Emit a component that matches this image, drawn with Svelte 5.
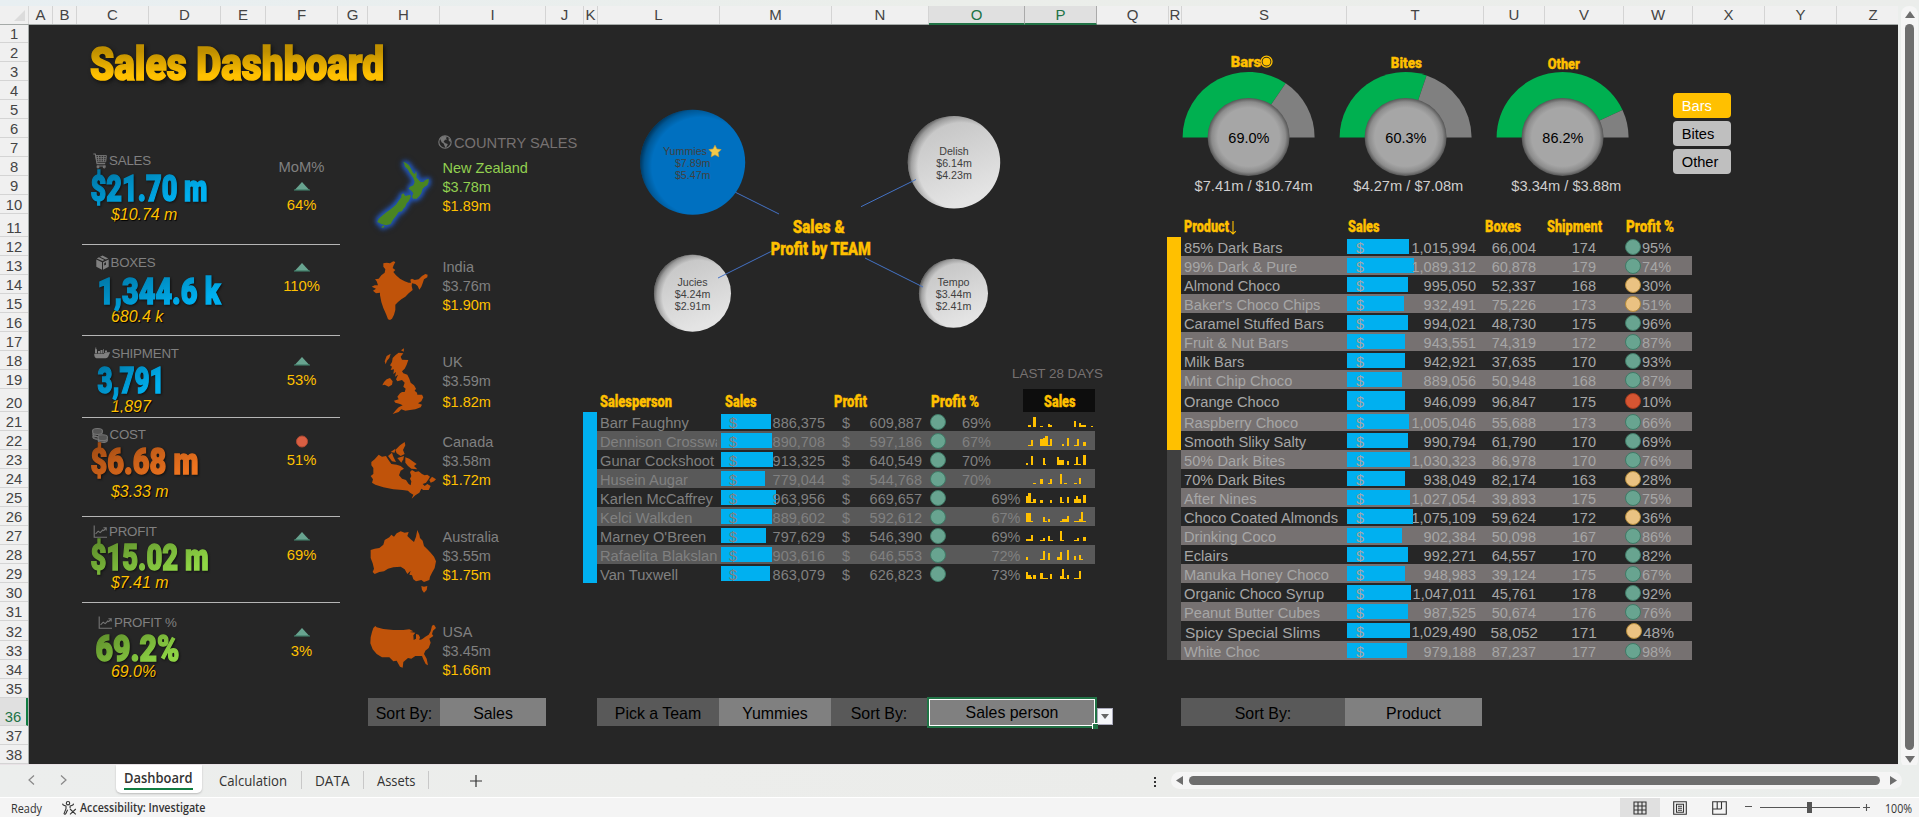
<script>
  const columns = [
    ['A', 24], ['B', 24], ['C', 72], ['D', 72], ['E', 45], ['F', 72], ['G', 30], ['H', 72], ['I', 106], ['J', 38],
    ['K', 14], ['L', 122], ['M', 112], ['N', 97], ['O', 96], ['P', 72], ['Q', 72], ['R', 13], ['S', 165], ['T', 137],
    ['U', 61], ['V', 79], ['W', 69], ['X', 72], ['Y', 72], ['Z', 62]
  ];
  const tall = { 1: 18, 11: 23, 20: 23, 32: 20, 36: 28 };
  const sheetRows = Array.from({ length: 38 }, (_, i) => ({ n: i + 1, h: tall[i + 1] ?? 19 }));

  const kpis = [
    { icon: 'cart', label: 'SALES', x: 63.5, gap: 2.5, value: '$21.70 m', vx: 61.5, vw: 117, sub: '$10.74 m', tone: 'blue', mom: '64%', h: 105, pad: 13.4, row: 36.4, base: 31.9, mp: 18.4, up: true },
    { icon: 'box', label: 'BOXES', x: 66.5, gap: 2, value: '1,344.6 k', vx: 68.5, vw: 123, sub: '680.4 k', tone: 'blue', mom: '110%', h: 91, pad: 10.4, row: 37.1, base: 33.6, mp: 16.7, up: true },
    { icon: 'ship', label: 'SHIPMENT', x: 64.5, gap: 1.5, value: '3,791', vx: 68.5, vw: 67, sub: '1,897', tone: 'blue', mom: '53%', h: 82, pad: 9.7, row: 36.5, base: 31, mp: 20.3, up: true, clip: true },
    { icon: 'coins', label: 'COST', x: 63, gap: 1.5, value: '$6.68 m', vx: 61.5, vw: 108, sub: '$3.33 m', tone: 'orange', mom: '51%', h: 99, pad: 9.4, row: 40.1, base: 31.6, mp: 18.4, up: false },
    { icon: 'chart', label: 'PROFIT', x: 63.5, gap: 2.5, value: '$15.02 m', vx: 61.5, vw: 118, sub: '$7.41 m', tone: 'green', mom: '69%', h: 86, pad: 7.4, row: 34.1, base: 30.3, mp: 14.3, up: true },
    { icon: 'chart', label: 'PROFIT %', x: 68.5, gap: 2.5, value: '69.2%', vx: 66.5, vw: 84, sub: '69.0%', tone: 'green', mom: '3%', h: 88, pad: 11.7, row: 32.8, base: 30.3, mp: 23.8, up: true }
  ];

  const countries = [
    { name: 'New Zealand', a: '$3.78m', b: '$1.89m', h: 99, y: 471, hot: true, shapes: [
      '190,485 198,489 207,496 214,508 219,518 225,522 228,513 230,522 229,532 236,540 242,546 250,546 256,540 266,536 266,546 262,556 254,560 248,566 244,580 238,588 230,596 220,596 216,590 220,580 214,572 206,566 210,560 220,556 224,546 220,534 210,520 203,508 195,500 192,490',
      '190,580 196,588 204,586 212,584 212,592 206,604 200,610 196,620 190,626 186,634 176,636 168,648 160,658 152,672 138,676 124,672 112,666 116,656 128,646 140,636 154,626 168,614 176,602 184,592 184,584',
      '124,682 130,676 134,680 128,684'] },
    { name: 'India', a: '$3.76m', b: '$1.90m', h: 95, y: 768, shapes: [
      '130,790 140,788 150,790 160,784 166,786 161,796 158,804 166,810 160,816 168,826 180,836 194,844 206,848 213,848 211,839 216,836 224,840 236,838 246,828 256,822 263,824 262,832 252,838 248,850 244,860 238,869 233,858 226,852 216,850 215,858 218,870 206,880 196,890 184,898 174,906 166,914 166,930 162,944 156,956 150,960 144,958 138,942 130,924 124,906 120,886 120,878 108,880 99,872 108,866 95,860 104,856 114,856 110,844 105,838 116,836 124,826 134,818 136,808 130,800'] },
    { name: 'UK', a: '$3.59m', b: '$1.82m', h: 80, y: 1053, uk: true, shapes: [
      '166,1066 176,1058 190,1060 182,1070 186,1079 205,1080 200,1094 194,1106 186,1114 190,1120 202,1124 208,1136 212,1148 222,1156 228,1166 224,1172 231,1178 232,1184 246,1184 250,1192 244,1204 234,1210 246,1214 242,1222 226,1228 210,1230 196,1232 184,1228 176,1236 158,1242 168,1230 176,1222 188,1216 180,1212 166,1208 162,1202 176,1198 172,1190 180,1180 186,1176 194,1176 197,1166 190,1160 194,1148 186,1140 172,1144 168,1138 174,1124 165,1130 168,1116 160,1122 162,1108 152,1110 156,1100 150,1096 156,1086 158,1074',
      '140,1138 150,1134 158,1144 156,1154 146,1160 134,1154 127,1156 132,1146',
      '140,1068 152,1061 148,1074 141,1082 137,1093 134,1084', '183,1051 192,1045 191,1055'] },
    { name: 'Canada', a: '$3.58m', b: '$1.72m', h: 95, y: 93, shapes: [
      '94,186 104,178 116,164 126,170 138,168 144,178 154,192 170,194 182,198 192,206 182,212 177,226 186,236 198,240 206,252 212,256 214,244 210,236 214,228 210,216 216,210 226,216 236,214 246,222 254,226 262,224 270,230 264,240 258,248 248,252 254,258 262,252 272,258 266,270 250,270 244,266 238,278 226,286 215,296 220,284 210,278 204,272 188,270 160,268 130,262 106,254 96,248 99,238 92,228 100,222 100,204 94,196',
      '144,168 156,158 160,170 168,186 156,184', '152,156 166,146 164,158', '166,150 180,136 194,126 196,136 189,150 194,162 182,168 170,160',
      '172,174 192,168 190,178 184,188', '196,172 208,176 218,184 230,192 222,198 232,208 214,206 204,198 196,188', '268,240 276,230 288,238 282,244 272,248'] },
    { name: 'Australia', a: '$3.55m', b: '$1.75m', h: 95, y: 378, shapes: [
      '92,450 104,446 118,444 130,434 134,420 148,412 154,404 162,410 170,400 182,394 194,398 206,396 202,408 212,418 222,426 228,410 232,390 238,404 240,414 248,422 252,438 262,448 272,458 282,470 288,484 284,504 276,518 270,530 268,540 252,546 244,540 228,544 220,538 216,526 208,524 212,512 202,522 194,508 182,500 160,502 144,506 132,514 118,516 104,522 98,516 102,506 98,490 92,474',
      '244,558 252,560 262,558 260,570 252,578 246,570'] },
    { name: 'USA', a: '$3.45m', b: '$1.66m', h: 77, y: 663, shapes: [
      '100,684 106,678 110,682 130,687 160,690 190,690 208,688 220,694 209,696 226,698 220,706 221,720 228,716 228,702 236,704 240,712 238,720 246,718 256,710 266,704 272,694 276,677 282,674 288,684 279,692 276,702 280,708 268,716 272,728 266,744 256,752 252,762 260,776 264,796 257,792 250,778 246,768 226,768 214,776 204,774 190,786 188,803 180,800 170,782 160,784 148,772 126,772 110,762 98,748 91,730 92,712 96,696'] }
  ];

  const bubbles = [
    { name: 'Yummies', a: '$7.89m', b: '$5.47m', x: 692.7, y: 162.3, r: 52.5, hot: true },
    { name: 'Delish', a: '$6.14m', b: '$4.23m', x: 954, y: 162.3, r: 46.2 },
    { name: 'Jucies', a: '$4.24m', b: '$2.91m', x: 692.5, y: 293.3, r: 38.5 },
    { name: 'Tempo', a: '$3.44m', b: '$2.41m', x: 953.5, y: 293.3, r: 34.5 }
  ];

  const people = [
    { n: 'Barr Faughny', s: '886,375', p: '609,887', q: '69%', w: 50, k: [[1282,9,6],[1296,9,30],[1316,8,3],[1338,6,9],[1343,7,5],[1411,6,18],[1425,6,12],[1431,14,6],[1458,6,3]] },
    { n: 'Dennison Crosswaite', s: '890,708', p: '597,186', q: '67%', w: 51, k: [[1282,9,3],[1291,5,18],[1316,9,21],[1325,5,24],[1330,8,30],[1338,5,4],[1344,6,21],[1378,5,6],[1391,6,24],[1411,9,3],[1418,7,21],[1436,9,12]] },
    { n: 'Gunar Cockshoot', s: '913,325', p: '640,549', q: '70%', w: 52, k: [[1277,5,6],[1291,5,27],[1324,5,21],[1329,4,3],[1364,5,24],[1369,14,15],[1391,6,12],[1411,6,4],[1417,6,24],[1423,8,3],[1436,9,30]] },
    { n: 'Husein Augar', s: '779,044', p: '544,768', q: '70%', w: 44, k: [[1296,9,3],[1316,8,15],[1338,5,3],[1344,5,15],[1371,7,30],[1383,9,3],[1411,9,4],[1425,6,18]] },
    { n: 'Karlen McCaffrey', s: '963,956', p: '669,657', q: '69%', w: 55, far: true, k: [[1277,6,21],[1282,9,30],[1291,7,4],[1296,9,12],[1316,8,9],[1344,6,9],[1371,7,18],[1378,5,4],[1391,6,18],[1411,6,12],[1417,6,21],[1423,8,12],[1436,9,24]] },
    { n: 'Kelci Walkden', s: '889,602', p: '592,612', q: '67%', w: 51, far: true, k: [[1277,14,27],[1291,5,3],[1324,6,15],[1330,6,3],[1338,6,9],[1371,8,3],[1378,12,9],[1391,6,18],[1411,14,3],[1425,6,9],[1431,5,30],[1436,9,3]] },
    { n: "Marney O'Breen", s: '797,629', p: '546,390', q: '69%', w: 45, far: true, k: [[1277,13,5],[1291,6,18],[1316,8,4],[1324,6,9],[1338,5,15],[1343,8,3],[1371,7,30],[1377,6,3],[1411,9,3],[1418,7,8],[1436,9,12]] },
    { n: 'Rafaelita Blaksland', s: '903,616', p: '646,553', q: '72%', w: 51, far: true, k: [[1277,5,9],[1316,8,3],[1324,6,27],[1338,6,21],[1364,7,9],[1371,7,24],[1391,6,30],[1411,6,12],[1425,6,15],[1431,6,3]] },
    { n: 'Van Tuxwell', s: '863,079', p: '626,823', q: '73%', w: 49, far: true, k: [[1277,6,20],[1283,7,12],[1289,4,6],[1296,9,12],[1316,8,18],[1324,13,3],[1344,6,15],[1371,6,9],[1377,6,30],[1383,4,3],[1391,6,12],[1411,13,3],[1425,6,24]] }
  ];

  const products = [
    ['85% Dark Bars', '1,015,994', '66,004', '174', '95%', 62, 'g'],
    ['99% Dark & Pure', '1,089,312', '60,878', '179', '74%', 67, 'g'],
    ['Almond Choco', '995,050', '52,337', '168', '30%', 61, 'y'],
    ["Baker's Choco Chips", '932,491', '75,226', '173', '51%', 57, 'y'],
    ['Caramel Stuffed Bars', '994,021', '48,730', '175', '96%', 61, 'g'],
    ['Fruit & Nut Bars', '943,551', '74,319', '172', '87%', 58, 'g'],
    ['Milk Bars', '942,921', '37,635', '170', '93%', 58, 'g'],
    ['Mint Chip Choco', '889,056', '50,948', '168', '87%', 55, 'g'],
    ['Orange Choco', '946,099', '96,847', '175', '10%', 58, 'r'],
    ['Raspberry Choco', '1,005,046', '55,688', '173', '66%', 62, 'g'],
    ['Smooth Sliky Salty', '990,794', '61,790', '170', '69%', 61, 'g'],
    ['50% Dark Bites', '1,030,323', '86,978', '170', '76%', 63, 'g'],
    ['70% Dark Bites', '938,049', '82,174', '163', '28%', 58, 'y'],
    ['After Nines', '1,027,054', '39,893', '175', '75%', 63, 'g'],
    ['Choco Coated Almonds', '1,075,109', '59,624', '172', '36%', 66, 'y'],
    ['Drinking Coco', '902,384', '50,098', '167', '86%', 55, 'g'],
    ['Eclairs', '992,271', '64,557', '170', '82%', 61, 'g'],
    ['Manuka Honey Choco', '948,983', '39,124', '175', '67%', 58, 'g'],
    ['Organic Choco Syrup', '1,047,011', '45,761', '178', '92%', 64, 'g'],
    ['Peanut Butter Cubes', '987,525', '50,674', '176', '76%', 61, 'g'],
    ['Spicy Special Slims', '1,029,490', '58,052', '171', '48%', 63, 'y'],
    ['White Choc', '979,188', '87,237', '177', '98%', 60, 'g']
  ];

  const gauges = [
    { name: 'Bars', w: 30.5, x: 60.7, y: 42.3, v: 0.69, label: '69.0%', foot: '$7.41m / $10.74m', fx: 83.6, radio: true },
    { name: 'Bites', w: 31, x: 63.8, y: 43, v: 0.603, label: '60.3%', foot: '$4.27m / $7.08m', fx: 81.3 },
    { name: 'Other', w: 32, x: 63.8, y: 44, v: 0.862, label: '86.2%', foot: '$3.34m / $3.88m', fx: 82.3 }
  ];
  const px = (v, r) => 78.6 - r * Math.cos(Math.PI * v);
  const py = (v, r) => 112.5 - r * Math.sin(Math.PI * v);
</script>

{#snippet fit(text, w, size, h, base, cls)}
  <svg class={'fit ' + cls} width={w} height={h}><text x="0" y={base} font-size={size} textLength={w} lengthAdjust="spacingAndGlyphs">{text}</text></svg>
{/snippet}

{#snippet icon(kind)}
  {#if kind === 'cart'}
    <svg class="ico" width="14" height="16" viewBox="0 0 14 16"><path d="M.3 1h2l1.7 9.6h8.2M3.8 13h9" /><path d="M2.8 2.6h10.6l-.7 6.2H3.8zM3 4.7h10M3.3 6.8h9.6M5.4 2.6l.5 6.2M8.1 2.6v6.2M10.8 2.6l-.4 6.2" stroke-width="1" /><circle cx="5" cy="14" r=".9" /><circle cx="11.2" cy="14" r=".9" /></svg>
  {:else if kind === 'box'}
    <svg class="ico solid" width="13" height="16" viewBox="0 0 13 16"><path d="M.3 4.4 6 7.2v7.6L.3 11.8zM12.7 4.4 7 7.2v7.6l5.7-3zM.8 3.4l2.2-1.1 5.5 2.8-2 1zM4 1.8 6.5.5l5.8 2.9-2.5 1.2z" /><path class="cut" d="m8.2 8.2 1.8-.9v2.4l-1.8.9z" /></svg>
  {:else if kind === 'ship'}
    <svg class="ico solid" width="16.5" height="16" viewBox="0 0 16.5 16"><path d="M.2 7.8h9.6l1.4-1.6h5l-1.6 3.6c-.4 1.6-1.4 2.4-3 2.4H2.4C1 12.2.2 10.5.2 7.8zM1 3.2h2v4H1zM1.4 1.6h.8v2h-.8zM4 5h2v2.2H4zM6.5 4h2v3.2h-2zM9 3.2h.8V7H9zM11 4.6h2V6h-2z" /></svg>
  {:else if kind === 'coins'}
    <svg class="ico" width="16" height="17" viewBox="0 0 16 17"><g fill="#555"><ellipse cx="5.5" cy="3.5" rx="4.8" ry="2" /><path d="M.7 3.500v2c0 2.600 9.600 2.600 9.600 0v-2M.9 6.200v1.800c.6 1.200 3 1.800 5 1.600M.9 8.700v1.800c.6 1 2.600 1.800 5 1.800" /><ellipse cx="10.700" cy="9.700" rx="4.600" ry="2" /><path d="M6.100 9.700v2c0 2.600 9.200 2.600 9.200 0v-2M6.100 12v1.600c0 2.600 9.200 2.600 9.200 0V12" /></g></svg>
  {:else}
    <svg class="ico" width="14" height="16" viewBox="0 0 14 16"><path d="M1.200 1.500v11.800H14M2.600 9.800l2.600-2.600 2 1.400 2.600-2.600 1 .6 2-2.400M10.400 3.800h2.800v2.800" /></svg>
  {/if}
{/snippet}

<div class="app">
  <div class="ribbon"></div>
  <div class="main">
    <div class="grid">
      <div class="cols">
        <div class="corner"><svg width="11" height="11"><path d="M11 0v11H0z" fill="#dcdcdc" /></svg></div>
        {#each columns as [c, w]}
          <div class="col" class:sel={c === 'O' || c === 'P'} style:width={w + 'px'}>{c}</div>
        {/each}
      </div>
      <div class="body">
        <div class="rows">
          {#each sheetRows as r}
            <div class="rh" class:sel={r.n === 36} style:height={r.h + 'px'}><span>{r.n}</span></div>
          {/each}
        </div>

        <div class="sheet">
          <section class="kpis">
            <svg class="title" width="300" height="66">
              <defs>
                <linearGradient id="gold" x1="0" y1="0" x2="0" y2="1"><stop offset=".25" stop-color="#bf8f00" /><stop offset=".7" stop-color="#ffc000" /></linearGradient>
                <linearGradient id="blue" x1="0" y1="0" x2="1" y2="1"><stop offset=".1" stop-color="#0077a6" /><stop offset=".75" stop-color="#00b0f0" /></linearGradient>
                <linearGradient id="orange" x1="0" y1="0" x2="1" y2="1"><stop offset=".1" stop-color="#a34c13" /><stop offset=".8" stop-color="#ee741f" /></linearGradient>
                <linearGradient id="green" x1="0" y1="0" x2="1" y2="1"><stop offset=".1" stop-color="#5f8f2c" /><stop offset=".8" stop-color="#8fd645" /></linearGradient>
              </defs>
              <text x="61" y="55" font-size="45.500" textLength="294" lengthAdjust="spacingAndGlyphs" fill="url(#gold)" stroke="url(#gold)">Sales Dashboard</text>
            </svg>
            {#each kpis as k, i}
              <div class="kpi" style:height={k.h + 'px'}>
                <div class="fig" style:padding-top={k.pad + 'px'}>
                  <div class="lab" style:padding-left={k.x + 'px'} style:gap={k.gap + 'px'}>{@render icon(k.icon)}<span>{k.label}</span></div>
                  <svg class="val" width="260" height={k.row}>
                    <text x={k.vx} y={k.base - 0.3} font-size="36.500" textLength={k.vw} lengthAdjust="spacingAndGlyphs" fill={`url(#${k.tone})`} stroke={`url(#${k.tone})`}>{k.value}</text>
                  </svg>
                  <div class="sub" class:clip={k.clip}>{k.sub}</div>
                </div>
                <div class="mom" style:padding-top={k.mp + 'px'}>
                  {#if i === 0}<div class="momh">MoM%</div>{/if}
                  <svg width="18" height="10">
                    {#if k.up}<path d="M9 1 16.300 9H1.700z" fill="#68a490" /><path d="M1 9h16" stroke="#3f7a66" stroke-width="1.200" />{:else}<circle cx="9" cy="5.500" r="5.500" fill="#d95f43" stroke="#b04a32" />{/if}
                  </svg>
                  <span>{k.mom}</span>
                </div>
              </div>
            {/each}
          </section>

          <section class="countries">
            <h2>
              <svg width="14" height="14" viewBox="0 0 14 14"><circle cx="7" cy="7" r="6.200" fill="none" stroke="#767676" stroke-width="1.100" /><path d="M2 3.500C4 .8 7 .5 9 1.500L8 3.200l1 1.200-2 .4L5.600 6.800l1.800 1.400 2.400.8-.8 2-1.400 2L6.600 11 5.800 8.800 3.600 7.200 2.600 5zM10.500 3l2 1.600.5 2.400-2.200-1z" fill="#767676" /></svg>
              <span>COUNTRY SALES</span>
            </h2>
            {#each countries as c}
              <div class="country" class:hot={c.hot} class:uk={c.uk} style:height={c.h + 'px'}>
                <svg width="72" height={c.h} viewBox={`84 ${c.y} 216 ${c.h * 3}`}>
                  {#each c.shapes as s}<polygon points={s} />{/each}
                </svg>
                <div class="ct"><span>{c.name}</span><span>{c.a}</span><span class="gold">{c.b}</span></div>
              </div>
            {/each}
            <div class="sort"><div class="dk c72">Sort By:</div><div class="lt c106">Sales</div></div>
          </section>

          <section class="team">
            <svg class="diagram" width="584" height="341" viewBox="583 25 584 341">
              <defs>
                <linearGradient id="silver" x1="0" y1="0" x2=".4" y2="1"><stop offset="0" stop-color="#bfbfbf" /><stop offset="1" stop-color="#e4e4e4" /></linearGradient>
                <radialGradient id="edge" cx=".58" cy=".54" r=".6"><stop offset=".78" stop-color="#000" stop-opacity="0" /><stop offset=".9" stop-color="#000" stop-opacity=".22" /><stop offset="1" stop-color="#000" stop-opacity=".62" /></radialGradient>
              </defs>
              {#each bubbles as b}
                <circle cx={b.x} cy={b.y} r={b.r} fill={b.hot ? '#0070c0' : 'url(#silver)'} />
                <circle cx={b.x} cy={b.y} r={b.r} fill="url(#edge)" />
                <g class="bt" text-anchor="middle">
                  <text x={b.hot ? 685 : b.x} y={b.y - 7.7}>{b.name}</text>
                  <text x={b.x} y={b.y + 4.3}>{b.a}</text>
                  <text x={b.x} y={b.y + 16.9}>{b.b}</text>
                </g>
              {/each}
              <path d="m715 145.200 1.900 3.800 4.200.6-3 3 .7 4.200-3.800-2-3.800 2 .7-4.200-3-3 4.200-.6z" fill="#f2c94a" stroke="#d9a32c" stroke-width=".6" />
              <path d="m735.500 192.300 43.500 21.700M861 206.700l55-27.200M718 278l55-27.500M865 258l58 29" stroke="#4472c4" />
              <g class="disp"><text x="792.700" y="232.700" font-size="17.500" textLength="52" lengthAdjust="spacingAndGlyphs">Sales &amp;</text><text x="770.700" y="255" font-size="17.500" textLength="100" lengthAdjust="spacingAndGlyphs">Profit by TEAM</text></g>
            </svg>
            <div class="days">LAST 28 DAYS</div>
            <div class="pgrid phead">
              <i></i>
              <div class="h3">{@render fit('Salesperson', 72, 16, 23, 18, 'disp')}</div>
              <div class="h6">{@render fit('Sales', 31.5, 16, 23, 18, 'disp')}</div>
              <div class="h3">{@render fit('Profit', 33, 16, 23, 18, 'disp')}</div>
              <div class="h3">{@render fit('Profit %', 48, 16, 23, 18, 'disp')}</div>
              <div class="black">{@render fit('Sales', 31.5, 16, 23, 18, 'disp')}</div>
            </div>
            {#each people as p, i}
              <div class="pgrid prow" class:alt={i % 2}>
                <i></i>
                <div class="name">{p.n}</div>
                <div class="money bar" style:--w={p.w + 'px'}><span>$</span><span>{p.s}</span></div>
                <div class="money pr"><span>$</span><span>{p.p}</span></div>
                <div class="pct" class:far={p.far}><b class="dot g"></b><span>{p.q}</span></div>
                <svg width="72" height="19" viewBox="1268 0 201.600 57" preserveAspectRatio="none" shape-rendering="crispEdges">
                  {#each p.k as [x, w, h]}<rect {x} y={45 - h} width={w} height={h} fill="#ffc000" />{/each}
                </svg>
              </div>
            {/each}
            <div class="sort picker">
              <div class="dk c122">Pick a Team</div><div class="lt c112">Yummies</div><div class="dk c96">Sort By:</div>
              <div class="active"><span>Sales person</span><u></u></div>
              <div class="drop"><svg width="8" height="5"><path d="M0 0h8L4 5z" fill="#666" /></svg></div>
            </div>
          </section>

          <section class="products">
            <div class="top">
              {#each gauges as g}
                <svg class="gauge" width="157.200" height="189" viewBox="0 0 157.200 189">
                  <defs><radialGradient id="knob"><stop offset=".75" stop-color="#a6a6a6" /><stop offset=".9" stop-color="#8c8c8c" /><stop offset="1" stop-color="#555" /></radialGradient></defs>
                  <text class="disp" x={g.x} y={g.y} font-size="15.500" textLength={g.w} lengthAdjust="spacingAndGlyphs">{g.name}</text>
                  {#if g.radio}<circle cx="96.500" cy="36.600" r="5.500" fill="none" stroke="#ffc000" stroke-width="1.300" /><circle cx="96.500" cy="36.600" r="3.900" fill="#ffc000" />{/if}
                  <path d={`M12.600 112.500A66 65.500 0 0 1 ${px(g.v, 66)} ${py(g.v, 65.5)}L78.600 112.500z`} fill="#00b050" />
                  <path d={`M144.600 112.500A66 65.500 0 0 0 ${px(g.v, 66)} ${py(g.v, 65.5)}L78.600 112.500z`} fill="#808080" />
                  <ellipse cx="78.600" cy="112" rx="41" ry="39" fill="url(#knob)" />
                  <text class="gv" x="78.900" y="118.300" text-anchor="middle">{g.label}</text>
                  <text class="gf" x={g.fx} y="166" text-anchor="middle">{g.foot}</text>
                </svg>
              {/each}
              <div class="slicer"><button class="on">Bars</button><button>Bites</button><button>Other</button></div>
            </div>
            <div class="qgrid qhead">
              <i></i>
              <div class="h3 prod">{@render fit('Product', 45, 16, 23, 18, 'disp')}<svg width="8" height="23"><path d="M4 7v13M1.200 17.200 4 20l2.800-2.800" fill="none" stroke="#ffc000" stroke-width="1.100" /></svg></div>
              <div class="h2">{@render fit('Sales', 31.5, 16, 23, 18, 'disp')}</div>
              <div class="h2">{@render fit('Boxes', 36, 16, 23, 18, 'disp')}</div>
              <div class="h3">{@render fit('Shipment', 55, 16, 23, 18, 'disp')}</div>
              <div class="h3">{@render fit('Profit %', 48, 16, 23, 18, 'disp')}</div>
            </div>
            {#each products as [n, s, b, sh, pc, w, t], i}
              <div class="qgrid qrow" class:alt={i % 2} class:tall={i === 8} class:big={i === 20} class:off={i > 10}>
                <i></i>
                <div class="name">{n}</div>
                <div class="money bar" style:--w={w + 'px'}><span>$</span><span>{s}</span></div>
                <div class="r8">{b}</div>
                <div class="r27">{sh}</div>
                <div class="pc"><b class={'dot ' + t}></b><span>{pc}</span></div>
              </div>
            {/each}
            <div class="sort last"><div class="dk c164">Sort By:</div><div class="lt c137">Product</div></div>
          </section>
        </div>
      </div>
    </div>
    <div class="vscroll">
      <svg width="10" height="7"><path d="M5 0l5 7H0z" fill="#6e6e6e" /></svg>
      <div class="vthumb"></div>
      <svg width="10" height="7"><path d="M0 0h10L5 7z" fill="#6e6e6e" /></svg>
    </div>
  </div>

  <div class="tabs">
    <div class="nav">
      <svg width="7" height="10"><path d="M6 .5 1 5l5 4.500" /></svg><svg width="7" height="10"><path d="m1 .5 5 4.500-5 4.500" /></svg>
    </div>
    <div class="tab cur">{@render fit('Dashboard', 68.5, 14, 19, 15, 'ui semi')}<u></u></div>
    <div class="tab t1">{@render fit('Calculation', 68, 14, 19, 15, 'ui')}</div>
    <div class="tab t2">{@render fit('DATA', 34.5, 14, 19, 15, 'ui')}</div>
    <div class="tab t3">{@render fit('Assets', 38.5, 14, 19, 15, 'ui')}</div>
    <svg class="plus" width="12" height="12"><path d="M6 0v12M0 6h12" stroke="#333" stroke-width="1.200" /></svg>
    <svg class="dots" width="3" height="10"><path d="M0 0h2v2H0zM0 4h2v2H0zM0 8h2v2H0z" fill="#333" /></svg>
    <div class="hscroll">
      <svg width="7" height="9"><path d="M7 0v9L0 4.500z" fill="#6e6e6e" /></svg>
      <div class="hthumb"></div>
      <svg width="7" height="9"><path d="M0 0v9l7-4.500z" fill="#6e6e6e" /></svg>
    </div>
  </div>

  <div class="status">
    {@render fit('Ready', 31, 12.5, 19, 14.5, 'ui')}
    <svg class="acc" width="15" height="14" viewBox="0 0 15 14"><g fill="none" stroke="#333" stroke-width="1.100"><circle cx="6" cy="2.200" r="1.700" /><path d="M.8 2.600C.4 3.800 1.600 4.400 4 5v2.600L2 12.600c.6 1.200 1.600.6 2-.4l1.600-3.400M11.400 2.600c.4 1.200-1 1.800-3.300 2.400v2.200M8 8l5.800 5.400M13.800 8 8 13.400" /></g></svg>
    {@render fit('Accessibility: Investigate', 125.5, 12, 19, 14, 'ui semi')}
    <div class="views">
      <div class="v on"><svg width="14" height="14"><path d="M1 1h12v12H1zM5 1v12M9 1v12M1 5h12M1 9h12" /></svg></div>
      <div class="v"><svg width="14" height="14"><path d="M.7.7h12.600v12.600H.7zM3.500 3.200h7v8h-7zM5 5.200h4M5 7.200h4M5 9.200h4" /></svg></div>
      <div class="v"><svg width="15" height="14"><path d="M.7.7h13.600v12.600H.7zM5.200.7V8M9.500.7V8M.7 8h8.800" /></svg></div>
    </div>
    <div class="zoom">
      <svg width="126" height="14"><path d="M1 6.500h7M16 7.500h100M119 7.500h7M122.500 4v7" stroke="#555" stroke-width="1.100" fill="none" /><path d="M63 2h5v11h-5z" fill="#555" /></svg>
      {@render fit('100%', 27, 12, 19, 14.5, 'ui')}
    </div>
  </div>
</div>

<style>
  :global(body) { margin: 0; overflow: hidden; }
  .app { width: 1919px; height: 817px; display: flex; flex-direction: column; background: #ebeeec; font-family: 'Liberation Sans', Arial, sans-serif; font-size: 14.5px; overflow: hidden; }
  .app * { box-sizing: border-box; }
  svg { display: block; flex: none; overflow: visible; }
  i, b, u { font-style: normal; text-decoration: none; display: block; }
  .ribbon { height: 6px; flex: none; background: linear-gradient(90deg, #e8eff2, #ebeeea 50%, #ebedeb); }
  .main { display: flex; height: 759px; flex: none; }
  .grid { width: 1898px; border-bottom: 1px solid #e8e2e6; }
  .cols { display: flex; height: 19px; background: #f0f0f0; border-bottom: 1px solid #a5aaa8; }
  .corner { width: 29px; padding: 4px 0 0 14px; border-right: 1px solid #d8d8d8; flex: none; }
  .col { flex: none; border-right: 1px solid #d4d4d4; color: #444; font-size: 15px; line-height: 18px; text-align: center; white-space: nowrap; }
  .col:last-child { padding-left: 10px; border-right: 0; }
  .col.sel { background: #e0e0e0; color: #217346; border-right-color: #aaa; height: 19px; border-bottom: 2px solid #217346; }
  .body { display: flex; height: 739px; }
  .rows { width: 29px; background: #f0f0f0; border-right: 1px solid #a5aaa8; flex: none; }
  .rh { display: flex; align-items: flex-end; justify-content: center; border-bottom: 1px solid #d4d4d4; color: #444; font-size: 14.8px; line-height: 18px; }
  .rh span { height: 18px; transform: translateY(1px); }
  .rh.sel { background: #e0e0e0; color: #217346; border-right: 2px solid #107c41; }
  .sheet { width: 1869px; background: #262626; display: grid; grid-template-columns: 339px 215px 584px 731px; }
  .disp { font-family: Roboto, 'Liberation Sans', sans-serif; font-weight: 900; fill: #ffc000; stroke: #ffc000; stroke-width: .35; }

  .title { height: 115px; font: 900 46px Roboto, sans-serif; filter: drop-shadow(2px 2px 2px #111); }
  .kpi { display: flex; background: linear-gradient(#b5b5b5, #b5b5b5) 53px 100% / 258px 1px no-repeat; }
  .kpi .fig, .kpi .mom { height: 100%; }
  .kpi:last-child { background: none; }
  .fig { width: 236px; }
  .lab { display: flex; align-items: center; height: 16px; line-height: 16px; font-size: 13.33px; color: #808080; letter-spacing: -.2px; }
  .ico { fill: none; stroke: #767676; stroke-width: 1.1; }
  .ico.solid { fill: #808080; stroke: none; }
  .ico .cut { fill: #262626; }
  .val { font: 900 36.5px Roboto, sans-serif; filter: drop-shadow(1px 1px 1px #111); }
  .title text { stroke-width: 1.7; }
  .val text { stroke-width: 1.5; }
  .sub { padding-left: 82px; height: 18px; line-height: 18px; font-size: 15.9px; font-style: italic; color: #ffc000; text-shadow: 1px 1px 1px #000; }
  .sub.clip { height: 15px; overflow: hidden; }
  .mom { width: 73px; display: flex; flex-direction: column; align-items: center; gap: 5px; color: #ffc000; font-size: 14.8px; line-height: 19px; }
  .momh { color: #808080; height: 18px; }

  .countries { display: flex; flex-direction: column; }
  h2 { margin: 0; padding: 109px 0 0 69.500px; height: 132px; display: flex; gap: 2.500px; color: #767171; font-size: 14.67px; font-weight: 400; line-height: 19px; white-space: nowrap; flex: none; }
  h2 svg { margin-top: 1px; }
  .country { display: flex; flex: none; gap: 2.500px; color: #808080; fill: #c0530a; }
  .ct { display: flex; flex-direction: column; }
  .ct span { height: 19px; line-height: 22px; }
  .ct .gold { color: #ffc000; }
  .uk .gold { padding-top: 2px; }
  .country.hot { color: #92d050; }
  .hot svg { fill: #4a8522; filter: drop-shadow(0 0 2px #2353b0) drop-shadow(0 0 2px #2353b0) drop-shadow(0 0 2px #2353b0); }

  .sort { display: flex; height: 28px; flex: none; font-size: 15.9px; line-height: 31px; text-align: center; color: #000; }
  .dk { background: #595959; }
  .lt { background: #808080; }
  .c72 { width: 72px; } .c106 { width: 106px; } .c122 { width: 122px; } .c112 { width: 112px; } .c96 { width: 96px; } .c164 { width: 164px; } .c137 { width: 137px; }

  .team, .products { display: flex; flex-direction: column; }
  .bt { font-size: 10.67px; fill: #404040; }
  .days { height: 23px; margin-left: 429px; font-size: 13.4px; line-height: 16px; color: #767171; white-space: nowrap; }
  .pgrid { display: grid; grid-template: 100% / 14px 122px 112px 97px 95px 72px; width: 512px; flex: none; }
  .phead { height: 23px; }
  .h3 { padding-left: 3px; } .h2 { padding-left: 2px; } .h6 { padding-left: 6px; }
  .black { background: #0d0d0d; padding-left: 21px; }
  .prow { height: 19px; line-height: 22px; color: #808080; }
  .prow i { background: #00b0f0; }
  .prow.alt { background: #595959; }
  .name { padding-left: 3px; overflow: hidden; white-space: nowrap; font-size: 14.67px; }
  .prow .name { margin-right: 2px; }
  .money { display: flex; justify-content: space-between; padding: 0 6px 0 10px; }
  .money.pr { padding-left: 11px; }
  .bar { background: linear-gradient(#00b0f0, #00b0f0) 2px 2px / var(--w) 15px no-repeat; }
  .pct { display: flex; justify-content: space-between; padding: 0 32px 0 2px; }
  .pct.far { padding-right: 2.500px; }
  .dot { width: 16px; height: 16px; margin-top: 2px; border-radius: 50%; border: 1px solid #3f7a66; background: #68a490; flex: none; }
  .dot.y { background: #eac282; border-color: #b38a3a; }
  .dot.r { background: #d65532; border-color: #a63c1f; }
  .picker { margin: 115px 0 0 14px; }
  .active { position: relative; width: 170px; height: 31px; margin-top: -1px; background: #808080; border: 2px solid #217346; box-shadow: inset 0 0 0 1px #fff; line-height: 27px; }
  .active u { position: absolute; right: -3px; bottom: -3px; width: 6px; height: 6px; background: #217346; border-left: 1px solid #fff; border-top: 1px solid #fff; }
  .drop { width: 16px; height: 17px; margin-top: 10px; background: #f5f6f9; border: 1px solid #aab; display: flex; align-items: center; justify-content: center; }

  .top { display: flex; height: 189px; padding-left: 2.700px; flex: none; }
  .gv { font-size: 14.5px; fill: #000; }
  .gf { font-size: 14.67px; fill: #d0cece; }
  .slicer { display: flex; flex-direction: column; gap: 3px; margin-left: 31.500px; padding-top: 68px; }
  button { width: 58px; height: 25px; border: 0; border-radius: 4px; background: #bfbfbf; color: #000; font: 14.67px 'Liberation Sans', sans-serif; text-align: left; padding: 1px 0 0 9px; }
  button.on { background: #ffc000; color: #fff; }
  .qgrid { display: grid; grid-template: 100% / 14px 165px 137px 61px 79px 69px; width: 525px; flex: none; }
  .qhead { height: 23px; }
  .prod { display: flex; }
  .qrow { height: 19px; line-height: 22px; color: #a6a6a6; text-align: right; }
  .qrow i { background: #ffc000; }
  .qrow.off i { background: #404040; }
  .qrow.alt { background: linear-gradient(#767171, #767171) 14px 0 no-repeat; }
  .qrow .name { text-align: left; }
  .qrow .bar { background-position: 1px 2px; padding-right: 7px; }
  .r8 { padding-right: 8px; } .r27 { padding-right: 27px; }
  .pc { display: flex; gap: 1px; padding-left: 2px; }
  .tall { height: 23px; line-height: 26px; }
  .tall .bar { background-size: var(--w) 19px; }
  .tall .dot { margin-top: 4px; }
  .big { height: 20px; line-height: 23px; }
  .big .name, .big .r8, .big .r27, .big .pc { font-size: 15.5px; }
  .big .name { padding-left: 4px; } .big .r8 { padding-right: 6px; } .big .r27 { padding-right: 26px; } .big .pc { padding-left: 3px; }
  .last { margin: 38px 0 0 14px; }

  .vscroll { width: 17px; height: 762px; margin-left: 3px; padding: 5px 0; background: #f5f5f5; border-radius: 8px; display: flex; flex-direction: column; align-items: center; gap: 6px; flex: none; }
  .vthumb { width: 9px; height: 726px; border-radius: 5px; background: #6e6e6e; }

  .tabs { height: 33px; flex: none; display: flex; align-items: flex-start; background: linear-gradient(90deg, #eceeed, #ecedeb 35%, #ebecea 60%, #ebeeec); border-bottom: 1px solid #fff; }
  .nav { width: 116px; display: flex; gap: 25px; padding: 10px 0 0 28px; fill: none; stroke: #888; stroke-width: 1.2; }
  .tab { height: 18px; margin-top: 6px; border-right: 1px solid #c8c8c8; }
  .tab.cur { width: 86px; height: 28px; margin-top: 0; padding: 3px 9px 0 8px; background: #fff; border: 0; border-radius: 0 0 5px 5px; box-shadow: 0 1px 2px #bbb; }
  .cur u { height: 2px; margin-top: 1px; background: #107c41; }
  .t1 { width: 100px; padding-left: 17px; } .t2 { width: 62px; padding-left: 13px; } .t3 { width: 65px; padding-left: 13px; }
  .ui { font-family: 'Open Sans', 'Noto Sans', sans-serif; fill: #333; }
  .semi { font-weight: 600; }
  .plus { margin: 10px 0 0 41px; }
  .dots { margin: 12px 0 0 672px; }
  .hscroll { width: 731px; height: 17px; margin: 7px 0 0 14px; padding: 0 5px; border-radius: 9px; background: #f5f5f5; display: flex; align-items: center; justify-content: space-between; }
  .hthumb { width: 691px; height: 9px; margin-right: 5px; border-radius: 5px; background: #6e6e6e; }

  .status { height: 19px; flex: none; display: flex; background: #f4f4f4; padding-left: 11px; }
  .acc { margin: 3px 3px 0 20px; }
  .views { display: flex; margin-left: 1414px; }
  .v { width: 40px; height: 19px; display: flex; align-items: center; justify-content: center; fill: none; stroke: #333; stroke-width: 1.1; }
  .v.on { background: #e0e0e0; }
  .zoom { display: flex; gap: 15px; margin-left: 4px; }
  .zoom > svg:first-child { margin-top: 2px; }
</style>
